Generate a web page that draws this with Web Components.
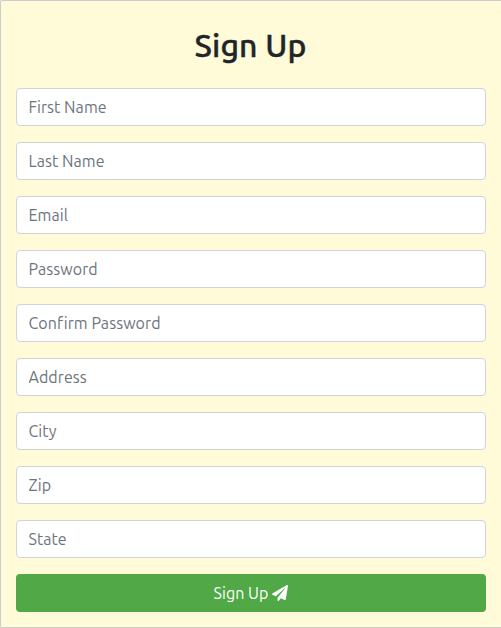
<!DOCTYPE html>
<html lang="en">
<head>
<meta charset="utf-8">
<title>Sign Up</title>
<style>
body { margin: 0; font: 400 16px/24px Ubuntu, "Noto Sans", sans-serif; color: #212529; background: #fffad8; }
</style>
</head>
<body>
<signup-card>
  <span slot="title">Sign Up</span>
  <form-field label="First Name"></form-field>
  <form-field label="Last Name"></form-field>
  <form-field label="Email"></form-field>
  <form-field label="Password"></form-field>
  <form-field label="Confirm Password"></form-field>
  <form-field label="Address"></form-field>
  <form-field label="City"></form-field>
  <form-field label="Zip"></form-field>
  <form-field label="State"></form-field>
  <submit-button>Sign Up</submit-button>
</signup-card>
<script>
class SignupCard extends HTMLElement {
  constructor() {
    super();
    this.attachShadow({ mode: "open" }).innerHTML = `
      <style>
        :host { display: block; box-sizing: border-box; height: 628px; padding: 25px 15px 15px; background: #fffad8;
          border: 1px solid #cccccf; border-right: 0; border-top-left-radius: 2px; border-bottom-left-radius: 2px; }
        h2 { margin: 0 0 24px; font-size: 32px; line-height: 38px; font-weight: 500; letter-spacing: 0.1px;
          -webkit-text-stroke: 0.4px currentColor; text-align: center; padding-right: 1px; }
        form { display: flex; flex-direction: column; gap: 16px; }
      </style>
      <h2><slot name="title"></slot></h2>
      <form><slot></slot></form>`;
  }
}
class FormField extends HTMLElement {
  connectedCallback() {
    this.attachShadow({ mode: "open" }).innerHTML = `
      <style>
        :host { display: block; height: 38px; }
        input { display: block; box-sizing: border-box; width: 100%; height: 38px; margin: 0; padding: 6px 11.5px;
          font: inherit; letter-spacing: 0.06px; border: 1px solid #ced4da; border-radius: 4px; background: #fff; color: #495057; outline: 0; }
        input::placeholder { color: #6c757d; opacity: 1; }
      </style>
      <input>`;
    const input = this.shadowRoot.querySelector("input");
    input.placeholder = this.getAttribute("label");
    input.type = /password/i.test(input.placeholder) ? "password" : "text";
  }
}
class SubmitButton extends HTMLElement {
  constructor() {
    super();
    this.attachShadow({ mode: "open" }).innerHTML = `
      <style>
        :host { display: block; height: 38px; }
        button { display: flex; align-items: center; justify-content: center; gap: 4px; width: 100%; height: 38px;
          margin: 0; padding: 0; font: inherit; letter-spacing: 0.06px; color: #fff; background: #50a846; border: 0; border-radius: 4px; }
        svg { width: 16px; height: 16px; }
      </style>
      <button type="button"><span><slot></slot></span>
        <svg viewBox="0 0 512 512" fill="currentColor" aria-hidden="true"><path d="M476 3.2L12.5 270.6c-18.1 10.4-15.8 35.6 2.2 43.2L121 358.4l287.3-253.2c5.500-4.900 13.300 2.600 8.600 8.300L176 407v80.500c0 23.600 28.500 32.900 42.500 15.800L282 426l124.600 52.200c14.200 6 30.400-2.900 33-18.200l72-432C515 7.800 493.300-6.800 476 3.200z"/></svg>
      </button>`;
  }
}
customElements.define("signup-card", SignupCard);
customElements.define("form-field", FormField);
customElements.define("submit-button", SubmitButton);
</script>
</body>
</html>
